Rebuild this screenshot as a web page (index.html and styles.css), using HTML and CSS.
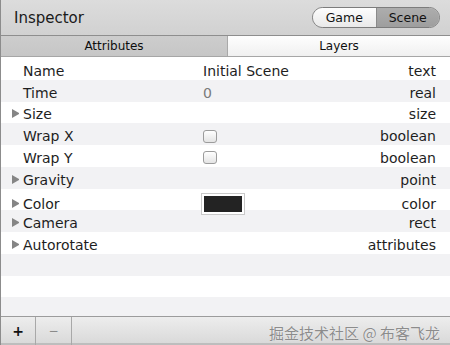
FILE: index.html
```html
<!DOCTYPE html>
<html lang="en">

<head>
    <meta charset="UTF-8">
    <meta name="viewport" content="width=device-width, initial-scale=1.0">
    <title>Inspector</title>
    <link rel="stylesheet" href="styles.css">
</head>

<body>
    <!-- painel Inspector: barra de titulo, abas, lista de propriedades e barra inferior -->
    <div class="window">
        <header class="titlebar">
            <span class="title">Inspector</span>
            <div class="segmented">
                <span class="seg">Game</span>
                <span class="seg seg-on">Scene</span>
            </div>
        </header>

        <nav class="tabs">
            <div class="tab tab-on">Attributes</div>
            <div class="tab">Layers</div>
        </nav>

        <div class="props">
            <div class="row">
                <div class="name"><span class="arrow"></span>Name</div>
                <div class="value">Initial Scene</div>
                <div class="type">text</div>
            </div>
            <div class="row">
                <div class="name"><span class="arrow"></span>Time</div>
                <div class="value value-dim">0</div>
                <div class="type">real</div>
            </div>
            <div class="row">
                <div class="name"><span class="arrow arrow-on"></span>Size</div>
                <div class="value"></div>
                <div class="type">size</div>
            </div>
            <div class="row">
                <div class="name"><span class="arrow"></span>Wrap X</div>
                <div class="value"><span class="check"></span></div>
                <div class="type">boolean</div>
            </div>
            <div class="row">
                <div class="name"><span class="arrow"></span>Wrap Y</div>
                <div class="value"><span class="check"></span></div>
                <div class="type">boolean</div>
            </div>
            <div class="row">
                <div class="name"><span class="arrow arrow-on"></span>Gravity</div>
                <div class="value"></div>
                <div class="type">point</div>
            </div>
            <div class="row">
                <div class="name"><span class="arrow arrow-on"></span>Color</div>
                <div class="value"><span class="swatch"><span class="swatch-fill"></span></span></div>
                <div class="type">color</div>
            </div>
            <div class="row">
                <div class="name"><span class="arrow arrow-on"></span>Camera</div>
                <div class="value"></div>
                <div class="type">rect</div>
            </div>
            <div class="row">
                <div class="name"><span class="arrow arrow-on"></span>Autorotate</div>
                <div class="value"></div>
                <div class="type">attributes</div>
            </div>
            <div class="row"></div>
            <div class="row"></div>
            <div class="row"></div>
        </div>

        <footer class="bottombar">
            <button class="tool tool-plus">+</button>
            <button class="tool tool-minus">−</button>
            <span class="watermark">掘金技术社区 @ 布客飞龙</span>
        </footer>
    </div>
</body>

</html>
```

FILE: styles.css
```css
/* painel no estilo Mac antigo */
body {
    margin: 0;
}

.window {
    width: 450px;
    height: 345px;
    display: flex;
    flex-direction: column;
    box-sizing: border-box;
    border-left: 1px solid #8c8c8c;
    overflow: hidden;
    font-family: "DejaVu Sans", Verdana, sans-serif;
    color: #1e1e1e;
}

.titlebar {
    flex: none;
    height: 35px;
    display: flex;
    align-items: center;
    justify-content: space-between;
    padding: 0 10px 0 13px;
    background: linear-gradient(#dcdcdc, #d1d1d1);
    border-bottom: 1px solid #8e8e8e;
}

.title {
    font-size: 15px;
    color: #1a1a1a;
}

.segmented {
    display: flex;
    width: 128px;
    height: 21px;
    box-sizing: border-box;
    border: 1px solid #7c7c7c;
    border-radius: 11px;
    overflow: hidden;
}

.seg {
    flex: 1;
    text-align: center;
    font-size: 12.5px;
    line-height: 19px;
    color: #111;
    background: linear-gradient(#fdfdfd, #e9e9e9);
}

.seg-on {
    background: linear-gradient(#adadad, #9e9e9e);
    border-left: 1px solid #8a8a8a;
}

.tabs {
    flex: none;
    height: 20px;
    display: flex;
    border-bottom: 1px solid #a6a6a6;
}

.tab {
    flex: 1;
    text-align: center;
    font-size: 12px;
    line-height: 20px;
    color: #0e0e0e;
    background: linear-gradient(#fefefe, #f0f0f0);
}

.tab-on {
    flex: none;
    width: 226px;
    background: linear-gradient(#cdcdcd, #c6c6c6);
    border-right: 1px solid #a9a9a9;
}

.props {
    flex: 1;
    padding-top: 1px;
    overflow: hidden;
    background: #fff;
}

.row {
    height: 21.75px;
    box-sizing: border-box;
    padding-top: 4px;
    display: grid;
    grid-template-columns: 202px 1fr auto;
    align-items: center;
    padding-right: 14px;
    font-size: 14px;
}

.row:nth-child(even) {
    background: #f2f2f4;
}

.name {
    display: flex;
    align-items: center;
    padding-left: 11px;
}

.arrow {
    width: 11px;
    height: 8px;
    flex: none;
}

.arrow-on {
    box-sizing: border-box;
    width: 11px;
    height: 9px;
    margin-top: -1px;
    border-left: 7px solid #858585;
    border-top: 4.5px solid transparent;
    border-bottom: 4.5px solid transparent;
    border-right: 4px solid transparent;
}

.value {
    display: flex;
    align-items: center;
}

.value-dim {
    color: #7a7a7a;
}

.type {
    text-align: right;
}

.check {
    width: 12px;
    height: 11px;
    border: 1px solid #9c9c9c;
    border-radius: 3px;
    background: linear-gradient(#ffffff, #e4e4e4);
}

.swatch {
    display: flex;
    margin-left: -2px;
    padding: 2px;
    border: 1px solid #c9c9c9;
    background: #fff;
}

.swatch-fill {
    width: 38px;
    height: 16px;
    background: #232323;
}

.bottombar {
    flex: none;
    height: 28px;
    display: flex;
    align-items: stretch;
    border-top: 1px solid #9c9c9c;
    background: linear-gradient(#ededed, #d8d8d8);
    box-shadow: inset 0 -2px 0 #bdbdbd;
}

.tool {
    width: 36px;
    padding: 0;
    border: none;
    border-right: 1px solid #a8a8a8;
    background: transparent;
    font-family: "DejaVu Sans", sans-serif;
}

.tool-plus {
    width: 35px;
    font-size: 14px;
    font-weight: bold;
    color: #111;
}

.tool-minus {
    font-size: 12px;
    color: #8a8a8a;
}

.watermark {
    margin-left: auto;
    padding-right: 10px;
    padding-top: 2px;
    align-self: center;
    font-family: "Noto Sans CJK SC", sans-serif;
    font-size: 15px;
    color: #8c8c8c;
    text-shadow: 0 0 1px #fff;
}
```
